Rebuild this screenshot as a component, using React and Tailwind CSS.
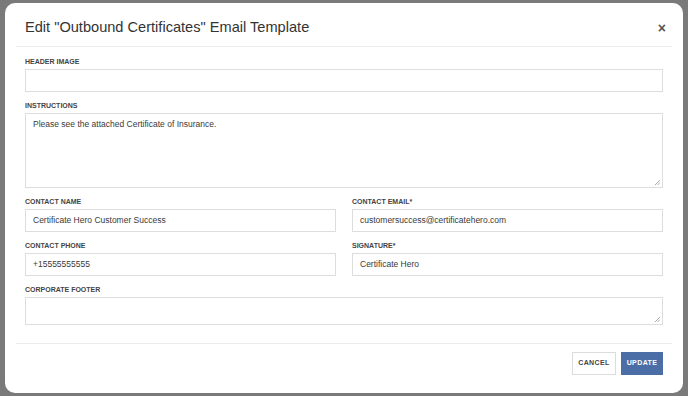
export default function App() {
  const font = { fontFamily: '"Liberation Sans", Arial, sans-serif' };
  return (
    <div className="w-[688px] h-[396px] bg-[#7a7a7a] pt-[3px] pl-[5px]" style={font}>
      <div className="w-[678px] h-[390px] bg-white rounded-[10px] px-[11px] flex flex-col">
        <div className="h-[44px] flex items-center justify-between border-b border-[#ececec] px-[9px] pt-[6px]">
          <h1 className="text-[14.6px] text-[#333]">Edit "Outbound Certificates" Email Template</h1>
          <span className="text-[#555] text-[14px] leading-none font-bold mr-[-3px]">×</span>
        </div>
        <div className="px-[9px] pt-[10px] flex flex-col">
          <Field label="HEADER IMAGE" />
          <Field label="INSTRUCTIONS" area h="h-[75px]" value="Please see the attached Certificate of Insurance." top />
          <div className="grid grid-cols-2 gap-x-[16px]">
            <Field label="CONTACT NAME" value="Certificate Hero Customer Success" />
            <Field label="CONTACT EMAIL*" value="customersuccess@certificatehero.com" />
            <Field label="CONTACT PHONE" value="+15555555555" />
            <Field label="SIGNATURE*" value="Certificate Hero" />
          </div>
          <Field label="CORPORATE FOOTER" area h="h-[28px]" />
        </div>
        <div className="mt-[9px] border-t border-[#ececec] flex justify-end gap-[5px] px-[9px] pt-[8px]">
          <button className="h-[23px] w-[44px] border border-[#dcdcdc] bg-white text-[7px] font-semibold text-[#444] tracking-[0.4px]">CANCEL</button>
          <button className="h-[23px] w-[42px] bg-[#4b6ea6] text-[7px] font-semibold text-white tracking-[0.4px]">UPDATE</button>
        </div>
      </div>
    </div>
  );
}

function Field({ label, value, area, h, top }) {
  return (
    <div className="flex flex-col mb-[9px]">
      <label className="text-[7px] font-semibold text-[#444] mb-[2px] leading-[10px]">{label}</label>
      <div
        className={`relative border border-[#dddddd] ${area ? h : 'h-[23px]'} flex ${top ? 'items-start pt-[4px]' : 'items-center'} px-[7px] text-[8.5px] text-[#3a3a3a]`}
      >
        {value}
        {area && (
          <svg className="absolute right-[2px] bottom-[2px]" width="5" height="5" viewBox="0 0 5 5">
            <path d="M5 0L0 5M5 2.5L2.5 5" stroke="#999" strokeWidth="0.8" />
          </svg>
        )}
      </div>
    </div>
  );
}
